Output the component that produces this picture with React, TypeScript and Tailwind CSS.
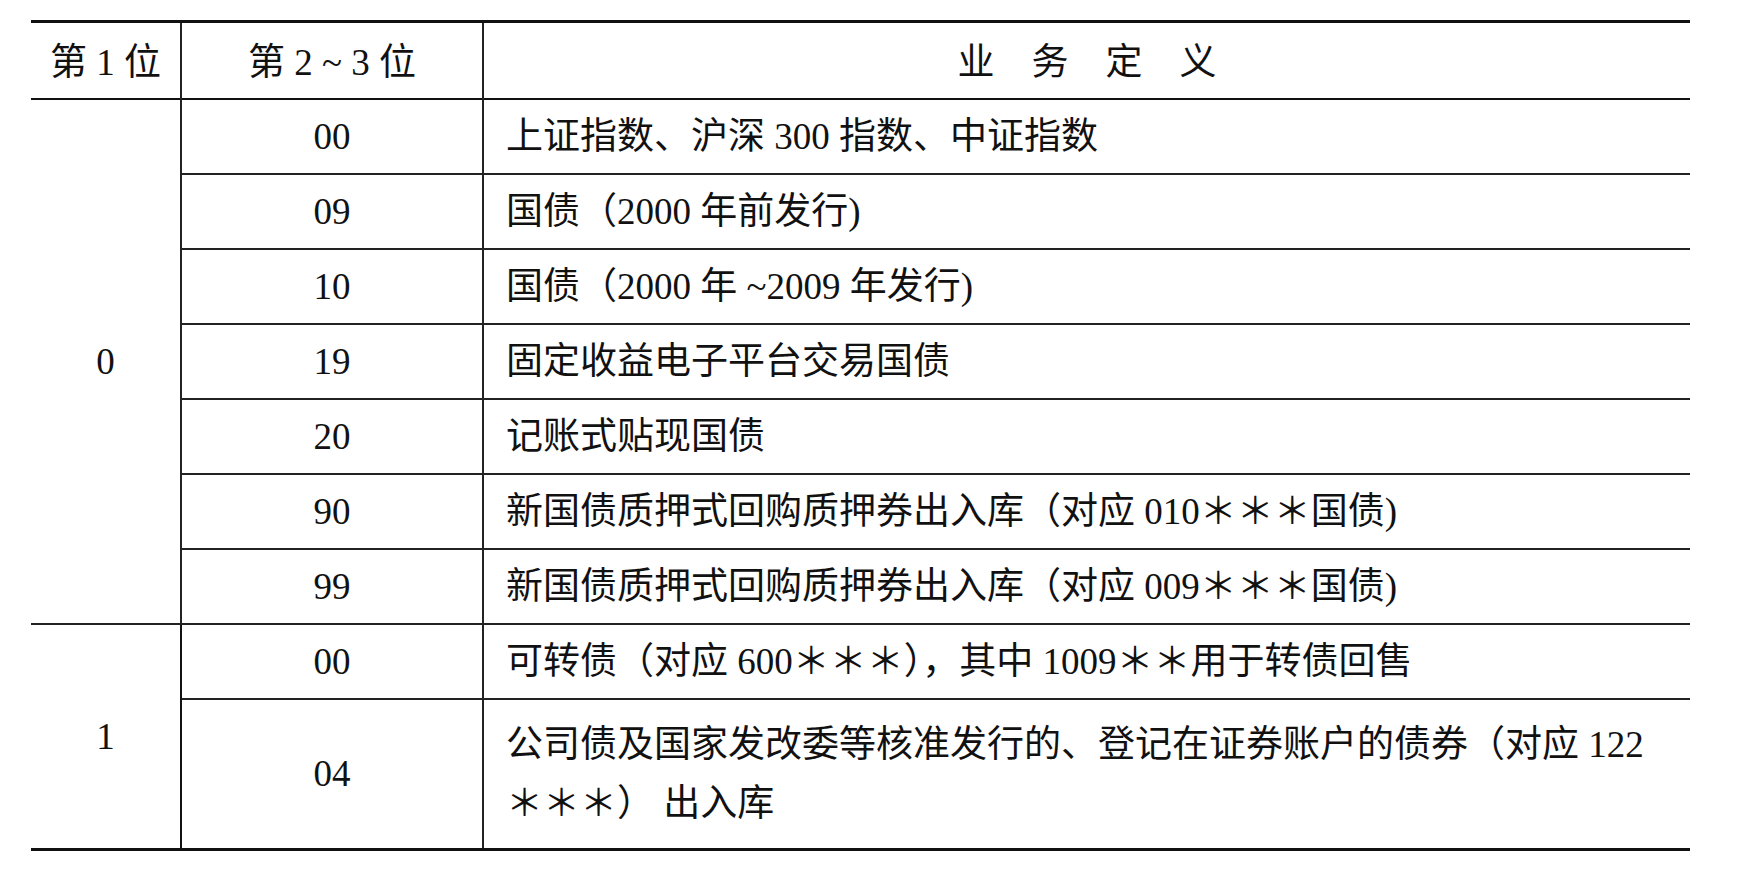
const groupZero: [string, string][] = [
  ['00', '上证指数、沪深 300 指数、中证指数'],
  ['09', '国债（2000 年前发行)'],
  ['10', '国债（2000 年 ~2009 年发行)'],
  ['19', '固定收益电子平台交易国债'],
  ['20', '记账式贴现国债'],
  ['90', '新国债质押式回购质押券出入库（对应 010＊＊＊国债)'],
  ['99', '新国债质押式回购质押券出入库（对应 009＊＊＊国债)'],
];

const font = { fontFamily: '"Liberation Serif", "Noto Sans CJK SC", serif' };

export default function App() {
  return (
    <div className="min-h-screen bg-white pl-[31px] pt-[20px] text-[#111]" style={font}>
      <table className="w-[1659px] table-fixed border-collapse text-[37px] leading-none">
        <colgroup>
          <col className="w-[150px]" />
          <col className="w-[302px]" />
          <col />
        </colgroup>
        <thead>
          <tr className="h-[77px] border-t-[3px] border-b-2 border-[#111]">
            <th className="border-r-2 border-[#222] pt-[4px] font-normal">第 1 位</th>
            <th className="border-r-2 border-[#222] pt-[4px] font-normal">第 2 ~ 3 位</th>
            <th className="pt-[4px] font-normal">业　务　定　义</th>
          </tr>
        </thead>
        <tbody>
          {groupZero.map(([code, text], i) => (
            <tr key={code} className="h-[75px]">
              {i === 0 && (
                <td rowSpan={7} className="border-r-2 border-b-2 border-[#222] text-center">
                  0
                </td>
              )}
              <td className="border-r-2 border-b-2 border-[#222] text-center">{code}</td>
              <td className="border-b-2 border-[#222] pl-[22px]">{text}</td>
            </tr>
          ))}
          <tr className="h-[75px]">
            <td rowSpan={2} className="border-r-2 border-b-[3px] border-[#111] text-center">
              1
            </td>
            <td className="border-r-2 border-b-2 border-[#222] text-center">00</td>
            <td className="border-b-2 border-[#222] pl-[22px]">
              可转债（对应 600＊＊＊），其中 1009＊＊用于转债回售
            </td>
          </tr>
          <tr className="h-[151px] border-b-[3px] border-[#111]">
            <td className="border-r-2 border-[#222] text-center">04</td>
            <td className="pl-[22px] leading-[59px]">
              公司债及国家发改委等核准发行的、登记在证券账户的债券（对应 122
              <br />
              ＊＊＊） 出入库
            </td>
          </tr>
        </tbody>
      </table>
    </div>
  );
}
